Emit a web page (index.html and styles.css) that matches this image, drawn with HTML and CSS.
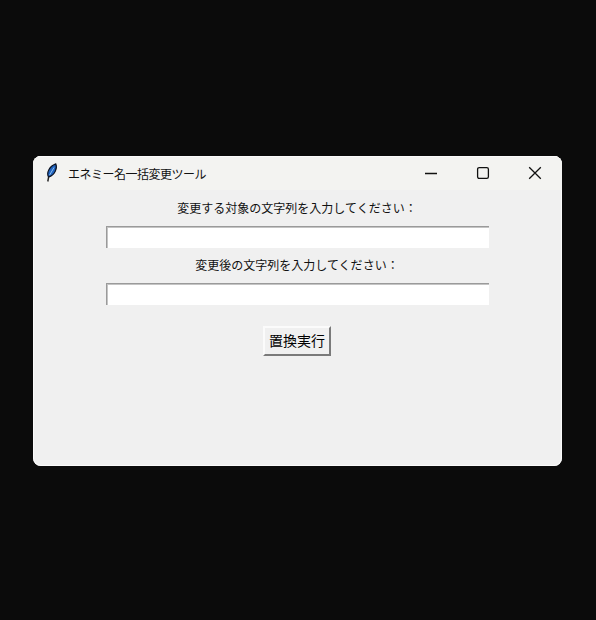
FILE: index.html
```html
<!DOCTYPE html>
<html lang="ja">
<head>
    <meta charset="UTF-8">
    <meta name="viewport" content="width=device-width, initial-scale=1.0">
    <title>エネミー名一括変更ツール</title>
    <link rel="stylesheet" href="styles.css">
</head>
<body>
    <div class="window">
        <div class="titlebar">
            <svg class="app-icon" width="12" height="20" viewBox="0 0 12 20">
                <path d="M1.8 18.5 L2.8 13" stroke="#222" stroke-width="1.4" fill="none"/>
                <path d="M2.6 14 C0.2 10 3 3.5 9.8 0.9 C11.6 5 9 12 2.6 14 Z" fill="#1f63c0" stroke="#0c1424" stroke-width="1.2"/>
                <path d="M3.6 12 L8 4.5" stroke="#8fc0ee" stroke-width="1" fill="none"/>
            </svg>
            <span class="title">エネミー名一括変更ツール</span>
            <div class="controls">
                <span class="control">
                    <svg width="14" height="14" viewBox="0 0 14 14"><path d="M1 7.5 H13" stroke="#111" stroke-width="1.3"/></svg>
                </span>
                <span class="control">
                    <svg width="14" height="14" viewBox="0 0 14 14"><rect x="1.6" y="1.6" width="10.8" height="10.8" rx="1.6" fill="none" stroke="#111" stroke-width="1.3"/></svg>
                </span>
                <span class="control">
                    <svg width="14" height="14" viewBox="0 0 14 14"><path d="M1.2 1.2 L12.8 12.8 M12.8 1.2 L1.2 12.8" stroke="#111" stroke-width="1.3"/></svg>
                </span>
            </div>
        </div>
        <div class="content">
            <label class="field-label">変更する対象の文字列を入力してください：</label>
            <input class="field" type="text">
            <label class="field-label">変更後の文字列を入力してください：</label>
            <input class="field" type="text">
            <button class="btn">置換実行</button>
        </div>
    </div>
</body>
</html>
```
FILE: styles.css
```css
html, body {
    margin: 0;
    height: 100%;
}
body {
    background-color: #0b0b0b;
    font-family: "Noto Sans CJK JP", "Liberation Sans", sans-serif;
    color: #111;
    padding: 156px 0 0 33px;
    box-sizing: border-box;
    overflow: hidden;
}
.window {
    width: 529px;
    height: 310px;
    background-color: #f0f0f0;
    border-radius: 8px;
    box-shadow: inset 0 0 0 1px #fbfbfb;
    overflow: hidden;
}
.titlebar {
    display: flex;
    align-items: center;
    height: 34px;
    padding-left: 13px;
    background-color: #f3f3f1;
    box-shadow: inset 0 1px 0 #fbfbfb;
    box-sizing: border-box;
}
.app-icon {
    flex: none;
}
.title {
    margin-left: 10px;
    font-size: 12px;
    letter-spacing: -0.5px;
}
.controls {
    display: flex;
    margin-left: auto;
    padding-right: 1px;
}
.control {
    display: flex;
    align-items: center;
    justify-content: center;
    width: 52px;
    height: 34px;
    margin-top: -1px;
}
.content {
    display: flex;
    flex-direction: column;
    align-items: center;
    padding: 8px 1px 0 0;
}
.field-label {
    font-size: 12px;
    line-height: 20px;
    height: 20px;
    margin-bottom: 8px;
}
.field {
    width: 383px;
    height: 22px;
    margin: 0 0 7px;
    padding: 0;
    box-sizing: border-box;
    background: #fff;
    border: none;
    border-top: 1px solid #9a9a9a;
    border-left: 1px solid #9a9a9a;
    box-shadow: inset 1px 1px 0 #c4c4c4;
    border-radius: 0;
    outline: none;
}
.btn {
    margin-top: 14px;
    width: 68px;
    height: 30px;
    padding: 0 0 2px;
    font-family: inherit;
    font-size: 14px;
    color: #000;
    background-color: #f0f0f0;
    border: 2px solid;
    border-color: #fbfbfb #7a7a7a #7a7a7a #fbfbfb;
    cursor: pointer;
}
```
